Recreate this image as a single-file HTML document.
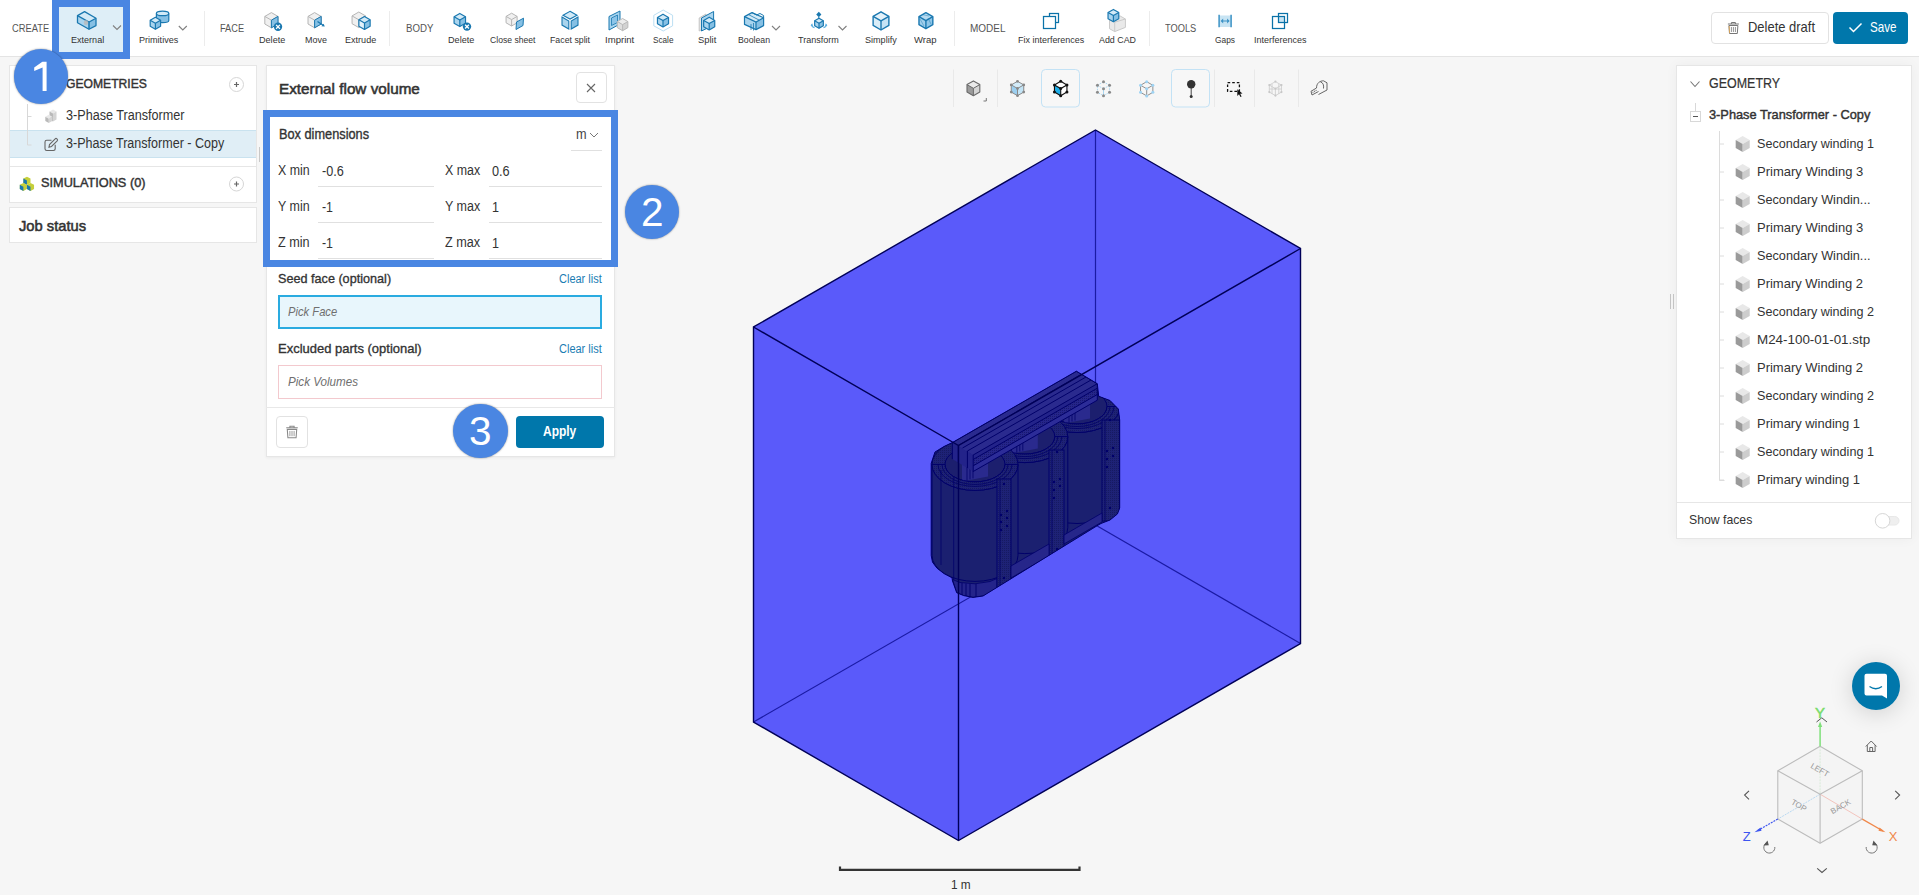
<!DOCTYPE html>
<html><head><meta charset="utf-8"><style>
*{box-sizing:border-box;margin:0;padding:0}
html,body{width:1919px;height:895px;overflow:hidden;background:#f6f6f6;font-family:"Liberation Sans",sans-serif;color:#333}
body{position:relative}
.a{position:absolute}
.t{position:absolute;white-space:nowrap;line-height:1;transform-origin:0 0}
.card{position:absolute;background:#fff;border:1px solid #e6e6e6}
.badge{position:absolute;width:54px;height:54px;border-radius:50%;background:#4a86e2;box-shadow:0 0 2px rgba(0,0,0,.45)}
.hl{position:absolute;border:7px solid #4a86e2}
</style></head><body>

<svg class="a" style="left:0;top:0" width="1919" height="895">
  <polygon points="1095.5,130 1300.5,248.5 1300.5,643.5 958.5,840.5 753.5,722 753.5,327" fill="#5a5afa"/>
  <g stroke="#1a1aa4" stroke-width="1.2" fill="none">
    <line x1="1095.5" y1="130" x2="1095.5" y2="525"/>
    <line x1="1095.5" y1="525" x2="753.5" y2="722"/>
    <line x1="1095.5" y1="525" x2="1300.5" y2="643.5"/>
  </g>
  <defs><clipPath id="tc"><polygon points="931.2,463.3 935,452 944,446.5 952.3,442.6 1076.4,371.2 1097.3,383.7 1098.7,396.3 1110,400.5 1118.3,409 1119.7,420 1119.7,508 1117.4,514 1110,520 1101,523.5 1098,525.2 983,596 973,597.4 963.7,595.6 956.7,592.7 952.5,581 952,577.8 944,573.6 937,568.2 932.5,562.2 931.2,555.5"/></clipPath><pattern id="dots" width="2" height="2" patternUnits="userSpaceOnUse"><rect width="2" height="2" fill="#1e2276"/><rect width="1" height="1" fill="#161a62"/></pattern><pattern id="dots2" width="2" height="2" patternUnits="userSpaceOnUse"><rect width="2" height="2" fill="#25258a"/><rect width="1" height="1" fill="#181870"/></pattern></defs><polygon points="931.2,463.3 935,452 944,446.5 952.3,442.6 1076.4,371.2 1097.3,383.7 1098.7,396.3 1110,400.5 1118.3,409 1119.7,420 1119.7,508 1117.4,514 1110,520 1101,523.5 1098,525.2 983,596 973,597.4 963.7,595.6 956.7,592.7 952.5,581 952,577.8 944,573.6 937,568.2 932.5,562.2 931.2,555.5" fill="#1b2070"/><g clip-path="url(#tc)"><path d="M1034,406.5 V497.5 A43,26 0 0 0 1120,497.5 V406.5 Z" fill="#1b2070" stroke="#00006a" stroke-width="1"/><ellipse cx="1077" cy="406.5" rx="43" ry="26" fill="url(#dots)" stroke="#00006a" stroke-width="1"/><ellipse cx="1077" cy="406.5" rx="30" ry="17.5" fill="#1c1f6e" stroke="#00006a" stroke-width="1"/><polygon points="1064,376.5 1090,361.5 1090,418.5 1064,423.5" fill="#2a2a8e"/><path d="M1069,379.5 V422.5 M1072,377.5 V421.5 M1075,376.5 V420.5" stroke="#00006a" stroke-width=".8"/><path d="M1034,406.5 A43,26 0 0 0 1120,406.5 H1107 A30,17.5 0 0 1 1047,406.5 Z" fill="url(#dots)" stroke="#00006a" stroke-width="1"/><path d="M1040,406.5 A37,22 0 0 0 1114,406.5" fill="none" stroke="#00006a" stroke-width=".8"/><path d="M1044,406.5 A33,20.0 0 0 0 1110,406.5" fill="none" stroke="#00006a" stroke-width=".8"/><path d="M981.8,436.6 V527.6 A43,26 0 0 0 1067.8,527.6 V436.6 Z" fill="#1b2070" stroke="#00006a" stroke-width="1"/><ellipse cx="1024.8" cy="436.6" rx="43" ry="26" fill="url(#dots)" stroke="#00006a" stroke-width="1"/><ellipse cx="1024.8" cy="436.6" rx="30" ry="17.5" fill="#1c1f6e" stroke="#00006a" stroke-width="1"/><polygon points="1011.8,406.6 1037.8,391.6 1037.8,448.6 1011.8,453.6" fill="#2a2a8e"/><path d="M1016.8,409.6 V452.6 M1019.8,407.6 V451.6 M1022.8,406.6 V450.6" stroke="#00006a" stroke-width=".8"/><path d="M981.8,436.6 A43,26 0 0 0 1067.8,436.6 H1054.8 A30,17.5 0 0 1 994.8,436.6 Z" fill="url(#dots)" stroke="#00006a" stroke-width="1"/><path d="M987.8,436.6 A37,22 0 0 0 1061.8,436.6" fill="none" stroke="#00006a" stroke-width=".8"/><path d="M991.8,436.6 A33,20.0 0 0 0 1057.8,436.6" fill="none" stroke="#00006a" stroke-width=".8"/><path d="M932,464.4 V555.4 A43,26 0 0 0 1018,555.4 V464.4 Z" fill="#1b2070" stroke="#00006a" stroke-width="1"/><ellipse cx="975" cy="464.4" rx="43" ry="26" fill="url(#dots)" stroke="#00006a" stroke-width="1"/><ellipse cx="975" cy="464.4" rx="30" ry="17.5" fill="#1c1f6e" stroke="#00006a" stroke-width="1"/><polygon points="962,434.4 988,419.4 988,476.4 962,481.4" fill="#2a2a8e"/><path d="M967,437.4 V480.4 M970,435.4 V479.4 M973,434.4 V478.4" stroke="#00006a" stroke-width=".8"/><path d="M932,464.4 A43,26 0 0 0 1018,464.4 H1005 A30,17.5 0 0 1 945,464.4 Z" fill="url(#dots)" stroke="#00006a" stroke-width="1"/><path d="M938,464.4 A37,22 0 0 0 1012,464.4" fill="none" stroke="#00006a" stroke-width=".8"/><path d="M942,464.4 A33,20.0 0 0 0 1008,464.4" fill="none" stroke="#00006a" stroke-width=".8"/><polygon points="952.3,442.6 973.2,455 1097.3,383.7 1097.3,400.2 973.2,471.5 952.3,459.1" fill="#23238a"/><polygon points="973.2,459.5 1097.3,388.2 1097.3,394.2 973.2,465.5" fill="url(#dots2)"/><polygon points="973.2,466 1097.3,394.7 1097.3,400.2 973.2,471.5" fill="#2c2c98"/><polygon points="952.3,442.6 1076.4,371.2 1097.3,383.7 973.2,455" fill="#2a2a8e"/><g stroke="#00006a" stroke-width="1" fill="none"><polyline points="952.3,442.6 1076.4,371.2 1097.3,383.7"/><line x1="958.2" y1="445.5" x2="1081.5" y2="374.3"/><line x1="962.5" y1="448" x2="1086" y2="377"/><line x1="967.4" y1="451" x2="1091" y2="380"/><line x1="973.2" y1="455" x2="1097.3" y2="383.7"/><line x1="973.2" y1="459.5" x2="1097.3" y2="388.2"/><line x1="973.2" y1="465.8" x2="1097.3" y2="394.5"/><line x1="973.2" y1="471.5" x2="1097.3" y2="400.2"/><line x1="952.3" y1="442.6" x2="952.3" y2="459.1"/><line x1="958.2" y1="445.5" x2="958.2" y2="462.5"/><line x1="967.4" y1="451" x2="967.4" y2="468"/><line x1="973.2" y1="455" x2="973.2" y2="471.5"/><line x1="1097.3" y1="383.7" x2="1097.3" y2="400.2"/></g><polygon points="952.5,579.5 960,582.5 975,583.8 990,581.5 997,578.5 997,592 983,596 973,597.4 963.7,595.6 956.7,592.7" fill="#24248a" stroke="#00006a" stroke-width=".8"/><path d="M962,583 V595.5 M966,583.5 V596.5 M970,583.8 V597 M976,584 V597" stroke="#00006a" stroke-width=".9"/><rect x="997" y="479" width="14" height="111" fill="url(#dots)" stroke="#00006a" stroke-width="1"/><line x1="1000" y1="479" x2="1000" y2="590" stroke="#00006a" stroke-width=".8"/><rect x="1049" y="450" width="15" height="110" fill="url(#dots)" stroke="#00006a" stroke-width="1"/><line x1="1052" y1="450" x2="1052" y2="560" stroke="#00006a" stroke-width=".8"/><rect x="1102" y="420" width="17.700000000000045" height="101" fill="url(#dots)" stroke="#00006a" stroke-width="1"/><line x1="1105" y1="420" x2="1105" y2="521" stroke="#00006a" stroke-width=".8"/><circle cx="1004" cy="484" r="1.2" fill="#00006a"/><circle cx="1004" cy="578" r="1.2" fill="#00006a"/><circle cx="1057" cy="452" r="1.2" fill="#00006a"/><circle cx="1057" cy="549" r="1.2" fill="#00006a"/><circle cx="1110" cy="420" r="1.2" fill="#00006a"/><circle cx="1110" cy="508" r="1.2" fill="#00006a"/><circle cx="1001" cy="515" r="1.2" fill="#00006a"/><circle cx="1007" cy="511" r="1.2" fill="#00006a"/><circle cx="1001" cy="522" r="1.2" fill="#00006a"/><circle cx="1007" cy="518" r="1.2" fill="#00006a"/><circle cx="1001" cy="530" r="1.2" fill="#00006a"/><circle cx="1007" cy="526" r="1.2" fill="#00006a"/><circle cx="1054" cy="482" r="1.2" fill="#00006a"/><circle cx="1060" cy="479" r="1.2" fill="#00006a"/><circle cx="1054" cy="490" r="1.2" fill="#00006a"/><circle cx="1060" cy="486" r="1.2" fill="#00006a"/><circle cx="1054" cy="498" r="1.2" fill="#00006a"/><circle cx="1107" cy="451" r="1.2" fill="#00006a"/><circle cx="1113" cy="448" r="1.2" fill="#00006a"/><circle cx="1107" cy="459" r="1.2" fill="#00006a"/><circle cx="1113" cy="456" r="1.2" fill="#00006a"/><circle cx="1107" cy="467" r="1.2" fill="#00006a"/><path d="M941,470 V565 M953.7,476 V580" stroke="#00006a" stroke-width=".8"/><polygon points="1011,566 1049,544 1049,556 1011,578" fill="#26268a" stroke="#00006a" stroke-width=".8"/><polygon points="1064,535 1102,513 1102,522 1064,544" fill="#26268a" stroke="#00006a" stroke-width=".8"/></g><polygon points="931.2,463.3 935,452 944,446.5 952.3,442.6 1076.4,371.2 1097.3,383.7 1098.7,396.3 1110,400.5 1118.3,409 1119.7,420 1119.7,508 1117.4,514 1110,520 1101,523.5 1098,525.2 983,596 973,597.4 963.7,595.6 956.7,592.7 952.5,581 952,577.8 944,573.6 937,568.2 932.5,562.2 931.2,555.5" fill="none" stroke="#00006a" stroke-width="1"/>
  <g stroke="#000058" stroke-width="1.4" fill="none" stroke-linejoin="miter">
    <polygon points="1095.5,130 1300.5,248.5 1300.5,643.5 958.5,840.5 753.5,722 753.5,327"/>
    <polyline points="753.5,327 958.5,445.5 1300.5,248.5"/>
    <line x1="958.5" y1="445.5" x2="958.5" y2="840.5"/>
  </g>
  <path d="M840,866.5 V869.8 H1079.5 V866.5" stroke="#333" stroke-width="2.2" fill="none"/>
  <g fill="#e9e9e9"><rect x="953" y="69.5" width="1" height="37.5"/><rect x="997" y="69.5" width="1" height="37.5"/><rect x="1214" y="69.5" width="1" height="37.5"/><rect x="1254" y="69.5" width="1" height="37.5"/><rect x="1298" y="69.5" width="1" height="37.5"/></g><rect x="1041.5" y="69.5" width="38" height="37.5" rx="4" fill="#f7f7f7" stroke="#c3e2f5" stroke-width="1"/><rect x="1171.5" y="69.5" width="38" height="37.5" rx="4" fill="#f7f7f7" stroke="#c3e2f5" stroke-width="1"/><polygon points="973.40,80.90 979.81,84.60 973.40,88.30 966.99,84.60" fill="#eaeaea"/><polygon points="966.99,84.60 973.40,88.30 973.40,95.70 966.99,92.00" fill="#9b9b9b"/><polygon points="973.40,88.30 979.81,84.60 979.81,92.00 973.40,95.70" fill="#d4d4d4"/><polygon points="973.40,80.90 979.81,84.60 979.81,92.00 973.40,95.70 966.99,92.00 966.99,84.60" fill="none" stroke="#6a6a6a" stroke-width="1.1" stroke-linejoin="round"/><polyline points="966.99,84.60 973.40,88.30 979.81,84.60" fill="none" stroke="#6a6a6a" stroke-width="1"/><line x1="973.4" y1="88.3" x2="973.4" y2="95.7" stroke="#6a6a6a" stroke-width="1"/><path d="M983.5,101 H986.3 V98" fill="none" stroke="#777" stroke-width="1"/><polygon points="1017.50,81.30 1023.74,84.90 1017.50,88.50 1011.26,84.90" fill="#d3ebf8"/><polygon points="1011.26,84.90 1017.50,88.50 1017.50,95.70 1011.26,92.10" fill="#9ccff0"/><polygon points="1017.50,88.50 1023.74,84.90 1023.74,92.10 1017.50,95.70" fill="#c3e4f6"/><polygon points="1017.50,81.30 1023.74,84.90 1023.74,92.10 1017.50,95.70 1011.26,92.10 1011.26,84.90" fill="none" stroke="#8a8a8a" stroke-width="1" stroke-linejoin="round"/><polyline points="1011.26,84.90 1017.50,88.50 1023.74,84.90" fill="none" stroke="#8a8a8a" stroke-width="1"/><line x1="1017.5" y1="88.5" x2="1017.5" y2="95.7" stroke="#8a8a8a" stroke-width="1"/><circle cx="1017.50" cy="81.30" r="1.4" fill="#888"/><circle cx="1011.26" cy="84.90" r="1.4" fill="#888"/><circle cx="1023.74" cy="84.90" r="1.4" fill="#888"/><circle cx="1017.50" cy="88.50" r="1.4" fill="#888"/><circle cx="1011.26" cy="92.10" r="1.4" fill="#888"/><circle cx="1023.74" cy="92.10" r="1.4" fill="#888"/><circle cx="1017.50" cy="95.70" r="1.4" fill="#888"/><polygon points="1060.70,81.30 1066.94,84.90 1060.70,88.50 1054.46,84.90" fill="#fff"/><polygon points="1054.46,84.90 1060.70,88.50 1060.70,95.70 1054.46,92.10" fill="#1eaee8"/><polygon points="1060.70,88.50 1066.94,84.90 1066.94,92.10 1060.70,95.70" fill="#fff"/><polygon points="1060.70,81.30 1066.94,84.90 1066.94,92.10 1060.70,95.70 1054.46,92.10 1054.46,84.90" fill="none" stroke="#111" stroke-width="1.1" stroke-linejoin="round"/><polyline points="1054.46,84.90 1060.70,88.50 1066.94,84.90" fill="none" stroke="#111" stroke-width="1.1"/><line x1="1060.7" y1="88.5" x2="1060.7" y2="95.7" stroke="#111" stroke-width="1.1"/><circle cx="1060.70" cy="81.30" r="1.5" fill="#111"/><circle cx="1054.46" cy="84.90" r="1.5" fill="#111"/><circle cx="1066.94" cy="84.90" r="1.5" fill="#111"/><circle cx="1060.70" cy="88.50" r="1.5" fill="#111"/><circle cx="1054.46" cy="92.10" r="1.5" fill="#111"/><circle cx="1066.94" cy="92.10" r="1.5" fill="#111"/><circle cx="1060.70" cy="95.70" r="1.5" fill="#111"/><polygon points="1103.50,81.80 1109.56,85.30 1109.56,92.30 1103.50,95.80 1097.44,92.30 1097.44,85.30" fill="none" stroke="#a9d7f2" stroke-width="1" stroke-dasharray="1.5 1"/><polyline points="1097.44,85.30 1103.50,88.80 1109.56,85.30" fill="none" stroke="#a9d7f2" stroke-width="1" stroke-dasharray="1.5 1"/><line x1="1103.5" y1="88.8" x2="1103.5" y2="95.8" stroke="#a9d7f2" stroke-width="1"/><circle cx="1103.50" cy="81.80" r="1.5" fill="#8a8a8a"/><circle cx="1097.44" cy="85.30" r="1.5" fill="#8a8a8a"/><circle cx="1109.56" cy="85.30" r="1.5" fill="#8a8a8a"/><circle cx="1103.50" cy="88.80" r="1.5" fill="#8a8a8a"/><circle cx="1097.44" cy="92.30" r="1.5" fill="#8a8a8a"/><circle cx="1109.56" cy="92.30" r="1.5" fill="#8a8a8a"/><circle cx="1103.50" cy="95.80" r="1.5" fill="#8a8a8a"/><polygon points="1146.70,81.70 1152.85,85.25 1152.85,92.35 1146.70,95.90 1140.55,92.35 1140.55,85.25" fill="none" stroke="#8f8f8f" stroke-width="1"/><polyline points="1140.55,85.25 1146.70,88.80 1152.85,85.25" fill="none" stroke="#8f8f8f" stroke-width="1"/><line x1="1146.7" y1="88.8" x2="1146.7" y2="95.9" stroke="#8f8f8f" stroke-width="1"/><circle cx="1146.70" cy="81.70" r="1.5" fill="#9fd3f3"/><circle cx="1140.55" cy="85.25" r="1.5" fill="#9fd3f3"/><circle cx="1152.85" cy="85.25" r="1.5" fill="#9fd3f3"/><circle cx="1146.70" cy="88.80" r="1.5" fill="#9fd3f3"/><circle cx="1140.55" cy="92.35" r="1.5" fill="#9fd3f3"/><circle cx="1152.85" cy="92.35" r="1.5" fill="#9fd3f3"/><circle cx="1146.70" cy="95.90" r="1.5" fill="#9fd3f3"/><line x1="1191.2" y1="86" x2="1191.2" y2="96" stroke="#444" stroke-width="1"/><circle cx="1191.2" cy="84.2" r="4.2" fill="#333"/><circle cx="1191.2" cy="96.4" r="1.5" fill="#333"/><rect x="1227.6" y="82.6" width="11.8" height="8.8" fill="none" stroke="#111" stroke-width="1.3" stroke-dasharray="2.6 2"/><polygon points="1237.3,89.3 1237.3,96 1239,94.3 1240.5,97 1241.6,96.4 1240.2,93.8 1242.5,93.6" fill="#111"/><g stroke="#cfcfcf" stroke-width=".9" fill="none"><polygon points="1275.40,81.60 1281.46,85.10 1281.46,92.10 1275.40,95.60 1269.34,92.10 1269.34,85.10"/><polyline points="1269.34,85.10 1275.40,88.60 1281.46,85.10"/><line x1="1275.4" y1="88.6" x2="1275.4" y2="95.6"/><path d="M1272,84 L1272,94 M1278.8,84 L1278.8,94 M1269.5,89 L1281.5,89"/></g><circle cx="1275.40" cy="81.60" r="1.1" fill="#c8c8c8"/><circle cx="1269.34" cy="85.10" r="1.1" fill="#c8c8c8"/><circle cx="1281.46" cy="85.10" r="1.1" fill="#c8c8c8"/><circle cx="1275.40" cy="88.60" r="1.1" fill="#c8c8c8"/><circle cx="1269.34" cy="92.10" r="1.1" fill="#c8c8c8"/><circle cx="1281.46" cy="92.10" r="1.1" fill="#c8c8c8"/><circle cx="1275.40" cy="95.60" r="1.1" fill="#c8c8c8"/><g fill="none" stroke="#666" stroke-width="1"><path d="M1316.5,88 C1316.5,83 1320,80.8 1323.5,80.8 L1327,82.8 L1327,90 L1318.5,94.5"/><path d="M1316.5,88 L1311,91.3 L1312,95 L1318.5,91.5"/><path d="M1320.5,82 C1323,82.5 1324,85 1323.5,88.5"/></g><path d="M1312.5,92.5 L1317,90" stroke="#777" stroke-width="1.2" stroke-dasharray="1 .8"/>
  <polygon points="1820.10,746.30 1862.30,770.80 1862.30,819.10 1820.10,843.30 1777.80,819.10 1777.80,770.80" fill="#f3f3f3" fill-opacity=".6"/><line x1="1820.1" y1="746.3" x2="1820.1" y2="794.2" stroke="#d8ead8" stroke-width="1" stroke-dasharray="2 1"/><line x1="1820.1" y1="794.2" x2="1777.8" y2="819.1" stroke="#b9d9f2" stroke-width="1" stroke-dasharray="2 1"/><line x1="1820.1" y1="794.2" x2="1862.3" y2="819.1" stroke="#f3c4bd" stroke-width="1"/><g fill="none" stroke="#bcbcbc" stroke-width="1.1" stroke-linejoin="round"><polygon points="1820.10,746.30 1862.30,770.80 1862.30,819.10 1820.10,843.30 1777.80,819.10 1777.80,770.80"/><polyline points="1777.80,770.80 1820.10,794.20 1862.30,770.80"/><line x1="1820.1" y1="794.2" x2="1820.1" y2="843.3"/></g><line x1="1820.1" y1="724" x2="1820.1" y2="746.3" stroke="#7fe07a" stroke-width="1.5"/><polygon points="1820.1,721.5 1818,727 1822.2,727" fill="#7fe07a"/><path d="M1816.5,722 L1821.8,717.8 L1827,722" fill="none" stroke="#555" stroke-width="1"/><line x1="1777.8" y1="819.1" x2="1757" y2="831" stroke="#3c55f0" stroke-width="1.2" stroke-dasharray="2 1"/><polygon points="1754.5,832.3 1760.5,827.5 1761.5,830.8" fill="#3c55f0"/><line x1="1862.3" y1="819.1" x2="1883" y2="831" stroke="#f0884a" stroke-width="1.3"/><polygon points="1885.5,832.3 1879.5,827.5 1878.5,830.8" fill="#f0884a"/><path d="M1749,790.8 L1744.6,795.1 L1749,799.4" fill="none" stroke="#555" stroke-width="1.1"/><path d="M1895.2,790.8 L1899.6,795.1 L1895.2,799.4" fill="none" stroke="#555" stroke-width="1.1"/><path d="M1817.2,868.3 L1822,872.5 L1826.8,868.3" fill="none" stroke="#555" stroke-width="1.1"/><text x="1820" y="717.5" font-family="Liberation Sans, sans-serif" font-size="15" fill="#78dc6a" stroke="#78dc6a" stroke-width=".5" text-anchor="middle">Y</text><text x="1746.8" y="841" font-family="Liberation Sans, sans-serif" font-size="13" fill="#3c55f0" text-anchor="middle">Z</text><text x="1893.2" y="841" font-family="Liberation Sans, sans-serif" font-size="13" fill="#f0884a" text-anchor="middle">X</text><text transform="translate(1819.5,770.5) rotate(30)" font-family="Liberation Sans, sans-serif" font-size="8" fill="#9a9a9a" text-anchor="middle" dominant-baseline="middle">LEFT</text><text transform="translate(1798.5,806) rotate(30)" font-family="Liberation Sans, sans-serif" font-size="8" fill="#9a9a9a" text-anchor="middle" dominant-baseline="middle">TOP</text><text transform="translate(1841,807) rotate(-30)" font-family="Liberation Sans, sans-serif" font-size="8" fill="#9a9a9a" text-anchor="middle" dominant-baseline="middle">BACK</text><path d="M1865.8,746.5 L1871.2,741 L1876.6,746.5 M1867.3,745.2 V751.5 H1875.1 V745.2 M1869.8,751.5 V747.5 H1872.6 V751.5" fill="none" stroke="#666" stroke-width="1"/><path d="M1766,843.2 A5.5,5.5 0 1 0 1774.8,847" fill="none" stroke="#777" stroke-width="1"/><polygon points="1763.5,845.5 1767.5,840.5 1768.8,845.3" fill="#555"/><path d="M1875,843.2 A5.5,5.5 0 1 1 1866.2,847" fill="none" stroke="#777" stroke-width="1"/><polygon points="1877.5,845.5 1873.5,840.5 1872.2,845.3" fill="#555"/>
</svg>
<div class="a" style="left:1852px;top:661.7px;width:48px;height:48px;border-radius:50%;background:#0077ab;box-shadow:0 3px 24px rgba(0,0,0,.16)"></div>
<svg class="a" style="left:1852px;top:661.7px" width="48" height="48">
 <path d="M14.5,11.8 H33 Q35,11.8 35,13.8 V36.5 L30,33.5 H14.5 Q12.5,33.5 12.5,31.5 V13.8 Q12.5,11.8 14.5,11.8 Z" fill="#fff"/>
 <path d="M17.5,24.5 Q23.8,29 30,24.5" fill="none" stroke="#0077ab" stroke-width="1.3"/>
</svg>


<div class="a" style="left:0;top:0;width:1919px;height:56px;background:#fff"></div>
<div class="a" style="left:0;top:56px;width:1919px;height:1px;background:#e4e4e4"></div>
<div class="a" style="left:59px;top:7px;width:64px;height:45px;background:#deeef7"></div>
<div class="a" style="left:1710.5px;top:12px;width:118px;height:32px;background:#fff;border:1px solid #e2e2e2;border-radius:4px"></div>
<div class="a" style="left:1833px;top:12px;width:74.5px;height:32px;background:#0077ab;border-radius:4px"></div>
<svg class="a" style="left:0;top:0" width="1919" height="57">
 <g fill="#ececec">
  <rect x="204" y="11" width="1" height="35"/><rect x="389" y="11" width="1" height="35"/>
  <rect x="954" y="11" width="1" height="35"/><rect x="1149" y="11" width="1" height="35"/>
 </g>
 <polygon points="84.60,11.60 96.00,18.20 89.00,22.00 77.50,15.60" fill="#d3eaf7"/><polygon points="77.50,15.60 89.00,22.00 89.00,29.30 77.50,22.80" fill="#a9d4ee"/><polygon points="89.00,22.00 96.00,18.20 96.00,25.60 89.00,29.30" fill="#86c0e4"/><polygon points="84.60,11.60 96.00,18.20 96.00,25.60 89.00,29.30 77.50,22.80 77.50,15.60" fill="none" stroke="#1a78b0" stroke-width="1.3" stroke-linejoin="round"/><polyline points="77.50,15.60 89.00,22.00 96.00,18.20" fill="none" stroke="#1a78b0" stroke-width="1.3"/><line x1="89" y1="22" x2="89" y2="29.3" stroke="#1a78b0" stroke-width="1.5"/><ellipse cx="86" cy="22.5" rx="2.2" ry="2.6" fill="#b9b9b9" opacity=".8"/><polyline points="113.00,25.50 117.00,29.50 121.00,25.50" fill="none" stroke="#808080" stroke-width="1.1"/><path d="M156.4,13.4 V20.5 A6.2,2.2 0 0 0 168.8,20.5 V13.4" fill="#86c0e4" stroke="#1a78b0" stroke-width="1.2"/><ellipse cx="162.6" cy="13.4" rx="6.2" ry="2.2" fill="#d3eaf7" stroke="#1a78b0" stroke-width="1.2"/><polygon points="155.40,17.30 160.60,20.30 155.40,23.30 150.20,20.30" fill="#d3eaf7"/><polygon points="150.20,20.30 155.40,23.30 155.40,29.30 150.20,26.30" fill="#a9d4ee"/><polygon points="155.40,23.30 160.60,20.30 160.60,26.30 155.40,29.30" fill="#86c0e4"/><polygon points="155.40,17.30 160.60,20.30 160.60,26.30 155.40,29.30 150.20,26.30 150.20,20.30" fill="none" stroke="#1a78b0" stroke-width="1.2" stroke-linejoin="round"/><polyline points="150.20,20.30 155.40,23.30 160.60,20.30" fill="none" stroke="#1a78b0" stroke-width="1.2" stroke-linejoin="round"/><line x1="155.4" y1="23.3" x2="155.4" y2="29.3" stroke="#1a78b0" stroke-width="1.2"/><polyline points="178.80,26.00 182.80,30.00 186.80,26.00" fill="none" stroke="#808080" stroke-width="1.1"/><polygon points="271.40,12.60 277.98,16.40 271.40,20.20 264.82,16.40" fill="#f0f0f0"/><polygon points="264.82,16.40 271.40,20.20 271.40,27.80 264.82,24.00" fill="#f0f0f0"/><polygon points="271.40,20.20 277.98,16.40 277.98,24.00 271.40,27.80" fill="#86c0e4"/><polygon points="271.40,12.60 277.98,16.40 277.98,24.00 271.40,27.80 264.82,24.00 264.82,16.40" fill="none" stroke="#b5b5b5" stroke-width="1.0" stroke-linejoin="round"/><polyline points="264.82,16.40 271.40,20.20 277.98,16.40" fill="none" stroke="#b5b5b5" stroke-width="1.0" stroke-linejoin="round"/><line x1="271.4" y1="20.2" x2="271.4" y2="27.799999999999997" stroke="#b5b5b5" stroke-width="1.0"/><polygon points="271.40,20.20 278.00,16.40 278.00,24.00 271.40,27.80" fill="#86c0e4" stroke="#1a78b0" stroke-width="1"/><circle cx="278" cy="26.8" r="4.2" fill="#1a78b0"/><path d="M276.11,24.91L279.89,28.69M279.89,24.91L276.11,28.69" stroke="#fff" stroke-width="1.3"/><polygon points="314.60,12.60 321.18,16.40 314.60,20.20 308.02,16.40" fill="#f0f0f0"/><polygon points="308.02,16.40 314.60,20.20 314.60,27.80 308.02,24.00" fill="#f0f0f0"/><polygon points="314.60,20.20 321.18,16.40 321.18,24.00 314.60,27.80" fill="#f0f0f0"/><polygon points="314.60,12.60 321.18,16.40 321.18,24.00 314.60,27.80 308.02,24.00 308.02,16.40" fill="none" stroke="#b5b5b5" stroke-width="1.0" stroke-linejoin="round"/><polyline points="308.02,16.40 314.60,20.20 321.18,16.40" fill="none" stroke="#b5b5b5" stroke-width="1.0" stroke-linejoin="round"/><line x1="314.6" y1="20.2" x2="314.6" y2="27.799999999999997" stroke="#b5b5b5" stroke-width="1.0"/><polygon points="314.60,20.20 321.20,16.40 321.20,24.00 314.60,27.80" fill="#86c0e4" stroke="#1a78b0" stroke-width="1"/><path d="M317.5,21.5 L323.5,25.5" stroke="#1a78b0" stroke-width="1.3"/><polygon points="324.80,26.50 321.40,26.20 323.60,23.80" fill="#1a78b0"/><polyline points="0.00,0.00 0.00,0.00 0.00,0.00" fill="none" stroke="none" stroke-width="1.1"/><polygon points="358.80,12.00 365.55,15.90 358.80,19.80 352.05,15.90" fill="#f0f0f0"/><polygon points="352.05,15.90 358.80,19.80 358.80,27.60 352.05,23.70" fill="#f0f0f0"/><polygon points="358.80,19.80 365.55,15.90 365.55,23.70 358.80,27.60" fill="#f0f0f0"/><polygon points="358.80,12.00 365.55,15.90 365.55,23.70 358.80,27.60 352.05,23.70 352.05,15.90" fill="none" stroke="#b5b5b5" stroke-width="1.0" stroke-linejoin="round"/><polyline points="352.05,15.90 358.80,19.80 365.55,15.90" fill="none" stroke="#b5b5b5" stroke-width="1.0" stroke-linejoin="round"/><line x1="358.8" y1="19.8" x2="358.8" y2="27.6" stroke="#b5b5b5" stroke-width="1.0"/><polygon points="364.50,16.50 370.13,19.75 364.50,23.00 358.87,19.75" fill="#d3eaf7"/><polygon points="358.87,19.75 364.50,23.00 364.50,29.50 358.87,26.25" fill="#e3f2fb"/><polygon points="364.50,23.00 370.13,19.75 370.13,26.25 364.50,29.50" fill="#86c0e4"/><polygon points="364.50,16.50 370.13,19.75 370.13,26.25 364.50,29.50 358.87,26.25 358.87,19.75" fill="none" stroke="#1a78b0" stroke-width="1.2" stroke-linejoin="round"/><polyline points="358.87,19.75 364.50,23.00 370.13,19.75" fill="none" stroke="#1a78b0" stroke-width="1.2" stroke-linejoin="round"/><line x1="364.5" y1="23" x2="364.5" y2="29.5" stroke="#1a78b0" stroke-width="1.2"/><polygon points="459.80,13.40 465.52,16.70 459.80,20.00 454.08,16.70" fill="#d3eaf7"/><polygon points="454.08,16.70 459.80,20.00 459.80,26.60 454.08,23.30" fill="#a9d4ee"/><polygon points="459.80,20.00 465.52,16.70 465.52,23.30 459.80,26.60" fill="#86c0e4"/><polygon points="459.80,13.40 465.52,16.70 465.52,23.30 459.80,26.60 454.08,23.30 454.08,16.70" fill="none" stroke="#1a78b0" stroke-width="1.2" stroke-linejoin="round"/><polyline points="454.08,16.70 459.80,20.00 465.52,16.70" fill="none" stroke="#1a78b0" stroke-width="1.2" stroke-linejoin="round"/><line x1="459.8" y1="20" x2="459.8" y2="26.6" stroke="#1a78b0" stroke-width="1.2"/><circle cx="467" cy="26.6" r="4.2" fill="#1a78b0"/><path d="M465.11,24.71L468.89,28.490000000000002M468.89,24.71L465.11,28.490000000000002" stroke="#fff" stroke-width="1.3"/><polygon points="511.60,13.20 517.14,16.40 511.60,19.60 506.06,16.40" fill="#f0f0f0"/><polygon points="506.06,16.40 511.60,19.60 511.60,26.00 506.06,22.80" fill="#f0f0f0"/><polygon points="511.60,19.60 517.14,16.40 517.14,22.80 511.60,26.00" fill="#f0f0f0"/><polygon points="511.60,13.20 517.14,16.40 517.14,22.80 511.60,26.00 506.06,22.80 506.06,16.40" fill="none" stroke="#b5b5b5" stroke-width="1.0" stroke-linejoin="round"/><polyline points="506.06,16.40 511.60,19.60 517.14,16.40" fill="none" stroke="#b5b5b5" stroke-width="1.0" stroke-linejoin="round"/><line x1="511.6" y1="19.6" x2="511.6" y2="26.0" stroke="#b5b5b5" stroke-width="1.0"/><polygon points="516.50,22.00 523.50,18.20 523.00,25.50 516.00,29.50" fill="#86c0e4" stroke="#1a78b0" stroke-width="1"/><polygon points="570.00,11.30 577.00,15.20 570.00,19.00 563.00,15.20" fill="#d3eaf7" stroke="#1a78b0" stroke-width="1.1"/><polygon points="562.00,17.10 568.80,21.00 568.80,29.00 562.00,25.10" fill="#a9d4ee" stroke="#1a78b0" stroke-width="1.1"/><polygon points="578.00,17.10 571.20,21.00 571.20,29.00 578.00,25.10" fill="#86c0e4" stroke="#1a78b0" stroke-width="1.1"/><polygon points="609.00,16.50 620.00,11.00 620.00,24.00 609.00,30.00" fill="#a9d4ee" stroke="#1a78b0" stroke-width="1"/><polygon points="611.50,18.00 617.50,15.00 617.50,22.50 611.50,25.50" fill="#8cc4e8" stroke="#1a78b0" stroke-width=".8"/><polygon points="622.60,18.50 627.88,21.55 622.60,24.60 617.32,21.55" fill="#ececec"/><polygon points="617.32,21.55 622.60,24.60 622.60,30.70 617.32,27.65" fill="#dedede"/><polygon points="622.60,24.60 627.88,21.55 627.88,27.65 622.60,30.70" fill="#d2d2d2"/><polygon points="622.60,18.50 627.88,21.55 627.88,27.65 622.60,30.70 617.32,27.65 617.32,21.55" fill="none" stroke="#b9b9b9" stroke-width="1.0" stroke-linejoin="round"/><polyline points="617.32,21.55 622.60,24.60 627.88,21.55" fill="none" stroke="#b9b9b9" stroke-width="1.0" stroke-linejoin="round"/><line x1="622.6" y1="24.6" x2="622.6" y2="30.700000000000003" stroke="#b9b9b9" stroke-width="1.0"/><polygon points="663.20,10.00 672.60,15.30 672.60,25.80 663.20,31.00 653.80,25.80 653.80,15.30" fill="none" stroke="#aad6ef" stroke-width=".8"/><polygon points="663.00,14.20 668.54,17.40 663.00,20.60 657.46,17.40" fill="#d3eaf7"/><polygon points="657.46,17.40 663.00,20.60 663.00,27.00 657.46,23.80" fill="#a9d4ee"/><polygon points="663.00,20.60 668.54,17.40 668.54,23.80 663.00,27.00" fill="#86c0e4"/><polygon points="663.00,14.20 668.54,17.40 668.54,23.80 663.00,27.00 657.46,23.80 657.46,17.40" fill="none" stroke="#1a78b0" stroke-width="1.2" stroke-linejoin="round"/><polyline points="657.46,17.40 663.00,20.60 668.54,17.40" fill="none" stroke="#1a78b0" stroke-width="1.2" stroke-linejoin="round"/><line x1="663" y1="20.6" x2="663" y2="27.0" stroke="#1a78b0" stroke-width="1.2"/><polygon points="699.20,18.00 706.00,14.00 706.00,27.00 699.20,31.00" fill="#e8e8e8" stroke="#c4c4c4" stroke-width="1"/><polygon points="701.50,18.00 713.60,11.50 713.60,25.00 701.50,31.00" fill="#a9d4ee" stroke="#1a78b0" stroke-width="1"/><polygon points="709.20,17.20 714.74,20.40 709.20,23.60 703.66,20.40" fill="#d3eaf7"/><polygon points="703.66,20.40 709.20,23.60 709.20,30.00 703.66,26.80" fill="#a9d4ee"/><polygon points="709.20,23.60 714.74,20.40 714.74,26.80 709.20,30.00" fill="#86c0e4"/><polygon points="709.20,17.20 714.74,20.40 714.74,26.80 709.20,30.00 703.66,26.80 703.66,20.40" fill="none" stroke="#1a78b0" stroke-width="1.2" stroke-linejoin="round"/><polyline points="703.66,20.40 709.20,23.60 714.74,20.40" fill="none" stroke="#1a78b0" stroke-width="1.2" stroke-linejoin="round"/><line x1="709.2" y1="23.6" x2="709.2" y2="30.0" stroke="#1a78b0" stroke-width="1.2"/><polygon points="744.50,16.60 752.00,12.60 763.60,17.80 756.00,22.00" fill="#d3eaf7"/><polygon points="744.50,16.60 756.00,22.00 756.00,29.60 744.50,24.40" fill="#a9d4ee"/><polygon points="756.00,22.00 763.60,17.80 763.60,25.60 756.00,29.60" fill="#86c0e4"/><polygon points="744.50,16.60 752.00,12.60 763.60,17.80 763.60,25.60 756.00,29.60 744.50,24.40" fill="none" stroke="#1a78b0" stroke-width="1.2" stroke-linejoin="round"/><polyline points="744.50,16.60 756.00,22.00 763.60,17.80" fill="none" stroke="#1a78b0" stroke-width="1.2"/><line x1="756" y1="22" x2="756" y2="29.6" stroke="#1a78b0" stroke-width="1.2"/><path d="M748.5,14.6 L759,20 M751,24 V30 M753.5,23 V30.5" stroke="#1a78b0" stroke-width=".8" fill="none"/><path d="M752,12.6 L756.5,15 L760,13.5 L763.6,15.5 V17.8" fill="none" stroke="#1a78b0" stroke-width="1"/><polyline points="772.00,26.00 776.00,30.00 780.00,26.00" fill="none" stroke="#808080" stroke-width="1.1"/><polygon points="819.00,18.20 823.33,20.70 819.00,23.20 814.67,20.70" fill="#d3eaf7"/><polygon points="814.67,20.70 819.00,23.20 819.00,28.20 814.67,25.70" fill="#a9d4ee"/><polygon points="819.00,23.20 823.33,20.70 823.33,25.70 819.00,28.20" fill="#86c0e4"/><polygon points="819.00,18.20 823.33,20.70 823.33,25.70 819.00,28.20 814.67,25.70 814.67,20.70" fill="none" stroke="#1a78b0" stroke-width="1.2" stroke-linejoin="round"/><polyline points="814.67,20.70 819.00,23.20 823.33,20.70" fill="none" stroke="#1a78b0" stroke-width="1.2" stroke-linejoin="round"/><line x1="819" y1="23.2" x2="819" y2="28.2" stroke="#1a78b0" stroke-width="1.2"/><polygon points="818.80,11.80 821.40,14.60 818.80,17.20 816.20,14.60" fill="#1a78b0"/><line x1="818.8" y1="17" x2="818.8" y2="19" stroke="#1a78b0" stroke-width="1"/><path d="M811.5,24.5 Q811.8,27.3 814.5,27.6 M826.5,24.5 Q826.2,27.3 823.5,27.6" fill="none" stroke="#5aaee0" stroke-width="1.1"/><polygon points="810.60,25.80 812.20,23.20 813.00,25.90" fill="#5aaee0"/><polygon points="827.40,25.80 825.80,23.20 825.00,25.90" fill="#5aaee0"/><polyline points="838.50,26.00 842.50,30.00 846.50,26.00" fill="none" stroke="#808080" stroke-width="1.1"/><polygon points="881.00,11.80 888.88,16.35 881.00,20.90 873.12,16.35" fill="#e4f2fa"/><polygon points="873.12,16.35 881.00,20.90 881.00,30.00 873.12,25.45" fill="#d9edf8"/><polygon points="881.00,20.90 888.88,16.35 888.88,25.45 881.00,30.00" fill="#c5e3f5"/><polygon points="881.00,11.80 888.88,16.35 888.88,25.45 881.00,30.00 873.12,25.45 873.12,16.35" fill="none" stroke="#1a78b0" stroke-width="1.4" stroke-linejoin="round"/><polyline points="873.12,16.35 881.00,20.90 888.88,16.35" fill="none" stroke="#1a78b0" stroke-width="1.4" stroke-linejoin="round"/><line x1="881" y1="20.9" x2="881" y2="30.0" stroke="#1a78b0" stroke-width="1.4"/><polygon points="925.90,12.70 932.83,16.70 925.90,20.70 918.97,16.70" fill="#b7dbf1"/><polygon points="918.97,16.70 925.90,20.70 925.90,28.70 918.97,24.70" fill="#a1cfec"/><polygon points="925.90,20.70 932.83,16.70 932.83,24.70 925.90,28.70" fill="#8fc6e8"/><polygon points="925.90,12.70 932.83,16.70 932.83,24.70 925.90,28.70 918.97,24.70 918.97,16.70" fill="none" stroke="#1a78b0" stroke-width="1.4" stroke-linejoin="round"/><polyline points="918.97,16.70 925.90,20.70 932.83,16.70" fill="none" stroke="#1a78b0" stroke-width="1.4" stroke-linejoin="round"/><line x1="925.9" y1="20.7" x2="925.9" y2="28.7" stroke="#1a78b0" stroke-width="1.4"/><path d="M920,19 L924,26 M928,18 L931,24 M922,14.5 L929,16" stroke="#1a78b0" stroke-width=".6" opacity=".7"/><rect x="1049.5" y="13.5" width="9" height="9" fill="#fff" stroke="#0a72a8" stroke-width="1.25"/><rect x="1043.5" y="16.5" width="12" height="12" fill="#fff" stroke="#0a72a8" stroke-width="1.25"/><polygon points="1109.50,19.00 1114.70,16.00 1120.20,16.00 1125.40,19.00 1125.40,27.40 1114.70,31.60 1109.50,28.70" fill="#e9e9e9" stroke="#cacaca" stroke-width="1" stroke-linejoin="round"/><polyline points="1109.50,19.00 1114.70,22.20 1125.40,19.00" fill="none" stroke="#cacaca" stroke-width="1"/><line x1="1114.7" y1="22.2" x2="1114.7" y2="31.6" stroke="#cacaca" stroke-width="1"/><polygon points="1113.40,9.40 1118.77,12.50 1113.40,15.60 1108.03,12.50" fill="#d3eaf7"/><polygon points="1108.03,12.50 1113.40,15.60 1113.40,21.80 1108.03,18.70" fill="#a9d4ee"/><polygon points="1113.40,15.60 1118.77,12.50 1118.77,18.70 1113.40,21.80" fill="#86c0e4"/><polygon points="1113.40,9.40 1118.77,12.50 1118.77,18.70 1113.40,21.80 1108.03,18.70 1108.03,12.50" fill="none" stroke="#1a78b0" stroke-width="1.2" stroke-linejoin="round"/><polyline points="1108.03,12.50 1113.40,15.60 1118.77,12.50" fill="none" stroke="#1a78b0" stroke-width="1.2" stroke-linejoin="round"/><line x1="1113.4" y1="15.6" x2="1113.4" y2="21.8" stroke="#1a78b0" stroke-width="1.2"/><rect x="1219" y="15.5" width="12.5" height="11.5" fill="#c8e4f3"/><path d="M1219.1,14.8 V27.2 M1231.1,14.8 V27.2" stroke="#3d93c6" stroke-width="1.5"/><path d="M1222,21 H1228.5" stroke="#3d93c6" stroke-width="1"/><polygon points="1220.60,21.00 1223.20,18.60 1223.20,23.40" fill="#3d93c6"/><polygon points="1229.70,21.00 1227.10,18.60 1227.10,23.40" fill="#3d93c6"/><rect x="1278.5" y="16.5" width="6" height="6" fill="#c8e4f3"/><rect x="1278.5" y="13.5" width="9" height="9" fill="none" stroke="#0a72a8" stroke-width="1.25"/><rect x="1272.5" y="16.5" width="12" height="12" fill="none" stroke="#0a72a8" stroke-width="1.25"/><path d="M1727.9,24.0 H1738.9 M1731.4,24.0 V22.5 H1735.4 V24.0" fill="none" stroke="#777" stroke-width="1.0"/><path d="M1728.9,25.5 L1729.5,33.5 H1737.3000000000002 L1737.9,25.5 Z" fill="none" stroke="#777" stroke-width="1.0"/><path d="M1731.4,27.0 V32.0 M1733.4,27.0 V32.0 M1735.4,27.0 V32.0" stroke="#777" stroke-width="0.8"/><path d="M1729.1000000000001,26.0 L1729.6000000000001,33.0" stroke="#e8a84c" stroke-width=".8"/><polyline points="1849.50,27.50 1853.50,31.50 1861.50,23.50" fill="none" stroke="#fff" stroke-width="1.5"/>
</svg>


<div class="card" style="left:9px;top:65px;width:248px;height:102px"></div>
<div class="a" style="left:10px;top:130px;width:246px;height:28px;background:#e0eef6;border-top:1px solid #c9e2ef;border-bottom:1px solid #c9e2ef"></div>
<div class="card" style="left:9px;top:166px;width:248px;height:37px"></div>
<div class="card" style="left:9px;top:207px;width:248px;height:36px"></div>
<svg class="a" style="left:0;top:57px" width="262" height="190">
 <g transform="translate(0,-57)">
 <circle cx="236.5" cy="84.5" r="7" fill="#fff" stroke="#d6d6d6" stroke-width="1"/>
 <path d="M234,84.5 H239 M236.5,82 V87" stroke="#666" stroke-width="1.2"/>
 <circle cx="236.5" cy="184" r="7" fill="#fff" stroke="#d6d6d6" stroke-width="1"/>
 <path d="M234,184 H239 M236.5,181.5 V186.5" stroke="#666" stroke-width="1.2"/>
 <path d="M27.5,104 V145 H31.5 M27.5,116.5 H31.5" fill="none" stroke="#d8d8d8" stroke-width="1"/>
 <!-- stepped block icon -->
 <polygon points="49.5,111.5 53,109.5 56.5,111.5 53,113.5" fill="#e8e8e8"/>
 <polygon points="49.5,111.5 53,113.5 53,121.5 49.5,119.5" fill="#b9b9b9"/>
 <polygon points="53,113.5 56.5,111.5 56.5,119.5 53,121.5" fill="#d4d4d4"/>
 <polygon points="45.3,116.8 48.8,114.8 52.3,116.8 48.8,118.8" fill="#e8e8e8"/>
 <polygon points="45.3,116.8 48.8,118.8 48.8,123 45.3,121" fill="#b9b9b9"/>
 <polygon points="48.8,118.8 52.3,116.8 52.3,121 48.8,123" fill="#d4d4d4"/>
 <!-- edit icon -->
 <path d="M51.5,140.3 H46.7 Q45,140.3 45,142 V148.8 Q45,150.5 46.7,150.5 H53.5 Q55.2,150.5 55.2,148.8 V144.8" fill="none" stroke="#666" stroke-width="1.1"/>
 <path d="M49,147.2 L49.5,144.5 L55.2,138.8 Q56,138 56.8,138.8 L57.2,139.2 Q58,140 57.2,140.8 L51.5,146.5 Z" fill="none" stroke="#666" stroke-width="1.1"/>
 <!-- simulations icon -->
 <g transform="matrix(0.89,0,0,0.95,3.78,8.075)">
 <polygon points="26,177.5 30,179.5 30,184 26,186 22,184 22,179.5" fill="#c5cf3a"/>
 <polygon points="22,179.5 26,181.5 26,186 22,184" fill="#1a78b0"/>
 <polygon points="22,184 26,186 26,190.5 22,192.5 18,190.5 18,186" fill="#c5cf3a"/>
 <polygon points="18,186 22,188 22,192.5 18,190.5" fill="#1a78b0"/>
 <polygon points="30,184 34,186 34,190.5 30,192.5 26,190.5 26,186" fill="#c5cf3a"/>
 <polygon points="26,186 30,188 30,192.5 26,190.5" fill="#1a78b0"/>
 </g>
 <!-- resize handle -->
 <rect x="259" y="147" width="1" height="15" fill="#c8c8c8"/>
 </g>
</svg>


<div class="card" style="left:266px;top:65px;width:349px;height:392px;box-shadow:0 1px 3px rgba(0,0,0,.05)"></div>
<div class="a" style="left:576px;top:72px;width:31px;height:31px;border:1px solid #e2e2e2;border-radius:4px;background:#fff"></div>
<div class="a" style="left:318px;top:186px;width:116px;height:1px;background:#e0e0e0"></div>
<div class="a" style="left:489px;top:186px;width:113px;height:1px;background:#e0e0e0"></div>
<div class="a" style="left:318px;top:222px;width:116px;height:1px;background:#e0e0e0"></div>
<div class="a" style="left:489px;top:222px;width:113px;height:1px;background:#e0e0e0"></div>
<div class="a" style="left:318px;top:258px;width:116px;height:1px;background:#e0e0e0"></div>
<div class="a" style="left:489px;top:258px;width:113px;height:1px;background:#e0e0e0"></div>
<div class="a" style="left:571px;top:150px;width:31px;height:1px;background:#e0e0e0"></div>
<div class="a" style="left:278px;top:295px;width:324px;height:34px;background:#e8f6fc;border:2px solid #2aabe0"></div>
<div class="a" style="left:278px;top:365px;width:324px;height:34px;background:#fff;border:1px solid #f3c9ce"></div>
<div class="a" style="left:266px;top:407px;width:349px;height:1px;background:#e8e8e8"></div>
<div class="a" style="left:276px;top:416px;width:32px;height:32px;border:1px solid #e2e2e2;border-radius:4px;background:#fff"></div>
<div class="a" style="left:516px;top:416px;width:88px;height:32px;background:#0077ab;border-radius:4px"></div>
<svg class="a" style="left:0;top:0" width="620" height="460">
 <path d="M587,84 L595,92 M595,84 L587,92" stroke="#666" stroke-width="1.1"/>
 <polyline points="590.00,133.00 594.00,137.00 598.00,133.00" fill="none" stroke="#777" stroke-width="1"/>
 <path d="M286.22499999999997,427.8 H297.775 M289.9,427.8 V426.225 H294.1 V427.8" fill="none" stroke="#888" stroke-width="1.05"/><path d="M287.275,429.375 L287.905,437.77500000000003 H296.09499999999997 L296.72499999999997,429.375 Z" fill="none" stroke="#888" stroke-width="1.05"/><path d="M289.9,430.95000000000005 V436.20000000000005 M292,430.95000000000005 V436.20000000000005 M294.1,430.95000000000005 V436.20000000000005" stroke="#888" stroke-width="0.8400000000000001"/>
</svg>


<div class="card" style="left:1676px;top:65px;width:236px;height:474px;box-shadow:0 0 12px rgba(0,0,0,.045)"></div>
<div class="a" style="left:1677px;top:502px;width:234px;height:1px;background:#e6e6e6"></div>
<svg class="a" style="left:1660px;top:60px" width="259" height="490">
 <g transform="translate(-1660,-60)">
 <polyline points="1690.50,81.50 1695.00,86.50 1699.50,81.50" fill="none" stroke="#777" stroke-width="1.1"/>
 <rect x="1690.5" y="111.5" width="10" height="10" fill="#fff" stroke="#d8d8d8" stroke-width="1"/>
 <path d="M1693,116.5 H1698" stroke="#555" stroke-width="1"/>
 <path d="M1695.5,103 V111" stroke="#d8d8d8" stroke-width="1"/>
 <path d="M1719.5,131 V480.5 H1724.5" fill="none" stroke="#dcdcdc" stroke-width="1"/>
 <polygon points="1742.70,135.90 1749.71,139.95 1742.70,144.00 1735.69,139.95" fill="#e8e8e8"/><polygon points="1735.69,139.95 1742.70,144.00 1742.70,152.10 1735.69,148.05" fill="#9a9a9a"/><polygon points="1742.70,144.00 1749.71,139.95 1749.71,148.05 1742.70,152.10" fill="#cdcdcd"/><polygon points="1742.70,135.90 1749.71,139.95 1749.71,148.05 1742.70,152.10 1735.69,148.05 1735.69,139.95" fill="none" stroke="none" stroke-width="0" stroke-linejoin="round"/><path d="M1719.5,144.0 H1724" stroke="#dcdcdc" stroke-width="1"/><polygon points="1742.70,163.90 1749.71,167.95 1742.70,172.00 1735.69,167.95" fill="#e8e8e8"/><polygon points="1735.69,167.95 1742.70,172.00 1742.70,180.10 1735.69,176.05" fill="#9a9a9a"/><polygon points="1742.70,172.00 1749.71,167.95 1749.71,176.05 1742.70,180.10" fill="#cdcdcd"/><polygon points="1742.70,163.90 1749.71,167.95 1749.71,176.05 1742.70,180.10 1735.69,176.05 1735.69,167.95" fill="none" stroke="none" stroke-width="0" stroke-linejoin="round"/><path d="M1719.5,172.0 H1724" stroke="#dcdcdc" stroke-width="1"/><polygon points="1742.70,191.90 1749.71,195.95 1742.70,200.00 1735.69,195.95" fill="#e8e8e8"/><polygon points="1735.69,195.95 1742.70,200.00 1742.70,208.10 1735.69,204.05" fill="#9a9a9a"/><polygon points="1742.70,200.00 1749.71,195.95 1749.71,204.05 1742.70,208.10" fill="#cdcdcd"/><polygon points="1742.70,191.90 1749.71,195.95 1749.71,204.05 1742.70,208.10 1735.69,204.05 1735.69,195.95" fill="none" stroke="none" stroke-width="0" stroke-linejoin="round"/><path d="M1719.5,200.0 H1724" stroke="#dcdcdc" stroke-width="1"/><polygon points="1742.70,219.90 1749.71,223.95 1742.70,228.00 1735.69,223.95" fill="#e8e8e8"/><polygon points="1735.69,223.95 1742.70,228.00 1742.70,236.10 1735.69,232.05" fill="#9a9a9a"/><polygon points="1742.70,228.00 1749.71,223.95 1749.71,232.05 1742.70,236.10" fill="#cdcdcd"/><polygon points="1742.70,219.90 1749.71,223.95 1749.71,232.05 1742.70,236.10 1735.69,232.05 1735.69,223.95" fill="none" stroke="none" stroke-width="0" stroke-linejoin="round"/><path d="M1719.5,228.0 H1724" stroke="#dcdcdc" stroke-width="1"/><polygon points="1742.70,247.90 1749.71,251.95 1742.70,256.00 1735.69,251.95" fill="#e8e8e8"/><polygon points="1735.69,251.95 1742.70,256.00 1742.70,264.10 1735.69,260.05" fill="#9a9a9a"/><polygon points="1742.70,256.00 1749.71,251.95 1749.71,260.05 1742.70,264.10" fill="#cdcdcd"/><polygon points="1742.70,247.90 1749.71,251.95 1749.71,260.05 1742.70,264.10 1735.69,260.05 1735.69,251.95" fill="none" stroke="none" stroke-width="0" stroke-linejoin="round"/><path d="M1719.5,256.0 H1724" stroke="#dcdcdc" stroke-width="1"/><polygon points="1742.70,275.90 1749.71,279.95 1742.70,284.00 1735.69,279.95" fill="#e8e8e8"/><polygon points="1735.69,279.95 1742.70,284.00 1742.70,292.10 1735.69,288.05" fill="#9a9a9a"/><polygon points="1742.70,284.00 1749.71,279.95 1749.71,288.05 1742.70,292.10" fill="#cdcdcd"/><polygon points="1742.70,275.90 1749.71,279.95 1749.71,288.05 1742.70,292.10 1735.69,288.05 1735.69,279.95" fill="none" stroke="none" stroke-width="0" stroke-linejoin="round"/><path d="M1719.5,284.0 H1724" stroke="#dcdcdc" stroke-width="1"/><polygon points="1742.70,303.90 1749.71,307.95 1742.70,312.00 1735.69,307.95" fill="#e8e8e8"/><polygon points="1735.69,307.95 1742.70,312.00 1742.70,320.10 1735.69,316.05" fill="#9a9a9a"/><polygon points="1742.70,312.00 1749.71,307.95 1749.71,316.05 1742.70,320.10" fill="#cdcdcd"/><polygon points="1742.70,303.90 1749.71,307.95 1749.71,316.05 1742.70,320.10 1735.69,316.05 1735.69,307.95" fill="none" stroke="none" stroke-width="0" stroke-linejoin="round"/><path d="M1719.5,312.0 H1724" stroke="#dcdcdc" stroke-width="1"/><polygon points="1742.70,331.90 1749.71,335.95 1742.70,340.00 1735.69,335.95" fill="#e8e8e8"/><polygon points="1735.69,335.95 1742.70,340.00 1742.70,348.10 1735.69,344.05" fill="#9a9a9a"/><polygon points="1742.70,340.00 1749.71,335.95 1749.71,344.05 1742.70,348.10" fill="#cdcdcd"/><polygon points="1742.70,331.90 1749.71,335.95 1749.71,344.05 1742.70,348.10 1735.69,344.05 1735.69,335.95" fill="none" stroke="none" stroke-width="0" stroke-linejoin="round"/><path d="M1719.5,340.0 H1724" stroke="#dcdcdc" stroke-width="1"/><polygon points="1742.70,359.90 1749.71,363.95 1742.70,368.00 1735.69,363.95" fill="#e8e8e8"/><polygon points="1735.69,363.95 1742.70,368.00 1742.70,376.10 1735.69,372.05" fill="#9a9a9a"/><polygon points="1742.70,368.00 1749.71,363.95 1749.71,372.05 1742.70,376.10" fill="#cdcdcd"/><polygon points="1742.70,359.90 1749.71,363.95 1749.71,372.05 1742.70,376.10 1735.69,372.05 1735.69,363.95" fill="none" stroke="none" stroke-width="0" stroke-linejoin="round"/><path d="M1719.5,368.0 H1724" stroke="#dcdcdc" stroke-width="1"/><polygon points="1742.70,387.90 1749.71,391.95 1742.70,396.00 1735.69,391.95" fill="#e8e8e8"/><polygon points="1735.69,391.95 1742.70,396.00 1742.70,404.10 1735.69,400.05" fill="#9a9a9a"/><polygon points="1742.70,396.00 1749.71,391.95 1749.71,400.05 1742.70,404.10" fill="#cdcdcd"/><polygon points="1742.70,387.90 1749.71,391.95 1749.71,400.05 1742.70,404.10 1735.69,400.05 1735.69,391.95" fill="none" stroke="none" stroke-width="0" stroke-linejoin="round"/><path d="M1719.5,396.0 H1724" stroke="#dcdcdc" stroke-width="1"/><polygon points="1742.70,415.90 1749.71,419.95 1742.70,424.00 1735.69,419.95" fill="#e8e8e8"/><polygon points="1735.69,419.95 1742.70,424.00 1742.70,432.10 1735.69,428.05" fill="#9a9a9a"/><polygon points="1742.70,424.00 1749.71,419.95 1749.71,428.05 1742.70,432.10" fill="#cdcdcd"/><polygon points="1742.70,415.90 1749.71,419.95 1749.71,428.05 1742.70,432.10 1735.69,428.05 1735.69,419.95" fill="none" stroke="none" stroke-width="0" stroke-linejoin="round"/><path d="M1719.5,424.0 H1724" stroke="#dcdcdc" stroke-width="1"/><polygon points="1742.70,443.90 1749.71,447.95 1742.70,452.00 1735.69,447.95" fill="#e8e8e8"/><polygon points="1735.69,447.95 1742.70,452.00 1742.70,460.10 1735.69,456.05" fill="#9a9a9a"/><polygon points="1742.70,452.00 1749.71,447.95 1749.71,456.05 1742.70,460.10" fill="#cdcdcd"/><polygon points="1742.70,443.90 1749.71,447.95 1749.71,456.05 1742.70,460.10 1735.69,456.05 1735.69,447.95" fill="none" stroke="none" stroke-width="0" stroke-linejoin="round"/><path d="M1719.5,452.0 H1724" stroke="#dcdcdc" stroke-width="1"/><polygon points="1742.70,471.90 1749.71,475.95 1742.70,480.00 1735.69,475.95" fill="#e8e8e8"/><polygon points="1735.69,475.95 1742.70,480.00 1742.70,488.10 1735.69,484.05" fill="#9a9a9a"/><polygon points="1742.70,480.00 1749.71,475.95 1749.71,484.05 1742.70,488.10" fill="#cdcdcd"/><polygon points="1742.70,471.90 1749.71,475.95 1749.71,484.05 1742.70,488.10 1735.69,484.05 1735.69,475.95" fill="none" stroke="none" stroke-width="0" stroke-linejoin="round"/><path d="M1719.5,480.0 H1724" stroke="#dcdcdc" stroke-width="1"/>
 <rect x="1881" y="516.5" width="18" height="8.5" rx="4.25" fill="#efefef" stroke="#e8e8e8"/>
 <circle cx="1882.6" cy="520.8" r="7.3" fill="#fff" stroke="#d6d6d6"/>
 <rect x="1670" y="294" width="1" height="15" fill="#c4c4c4"/><rect x="1673" y="294" width="1" height="15" fill="#c4c4c4"/>
 </g>
</svg>

<div class="t" style="left:11.85px;top:23.54px;font-size:10px;font-weight:normal;color:#555;transform:scaleX(0.934);">CREATE</div>
<div class="t" style="left:219.75px;top:23.54px;font-size:10px;font-weight:normal;color:#555;transform:scaleX(0.921);">FACE</div>
<div class="t" style="left:405.60px;top:23.54px;font-size:10px;font-weight:normal;color:#555;transform:scaleX(0.967);">BODY</div>
<div class="t" style="left:969.50px;top:23.54px;font-size:10px;font-weight:normal;color:#555;transform:scaleX(0.998);">MODEL</div>
<div class="t" style="left:1165.00px;top:23.54px;font-size:10px;font-weight:normal;color:#555;transform:scaleX(0.927);">TOOLS</div>
<div class="t" style="left:70.80px;top:34.62px;font-size:9.9px;font-weight:normal;color:#333;transform:scaleX(0.916);">External</div>
<div class="t" style="left:138.75px;top:34.62px;font-size:9.9px;font-weight:normal;color:#333;transform:scaleX(0.917);">Primitives</div>
<div class="t" style="left:258.75px;top:34.62px;font-size:9.9px;font-weight:normal;color:#333;transform:scaleX(0.920);">Delete</div>
<div class="t" style="left:305.00px;top:34.62px;font-size:9.9px;font-weight:normal;color:#333;transform:scaleX(0.907);">Move</div>
<div class="t" style="left:345.00px;top:34.62px;font-size:9.9px;font-weight:normal;color:#333;transform:scaleX(0.918);">Extrude</div>
<div class="t" style="left:448.00px;top:34.62px;font-size:9.9px;font-weight:normal;color:#333;transform:scaleX(0.925);">Delete</div>
<div class="t" style="left:490.00px;top:34.62px;font-size:9.9px;font-weight:normal;color:#333;transform:scaleX(0.872);">Close sheet</div>
<div class="t" style="left:550.00px;top:34.62px;font-size:9.9px;font-weight:normal;color:#333;transform:scaleX(0.889);">Facet split</div>
<div class="t" style="left:604.50px;top:34.62px;font-size:9.9px;font-weight:normal;color:#333;transform:scaleX(0.969);">Imprint</div>
<div class="t" style="left:652.50px;top:34.62px;font-size:9.9px;font-weight:normal;color:#333;transform:scaleX(0.830);">Scale</div>
<div class="t" style="left:698.00px;top:34.62px;font-size:9.9px;font-weight:normal;color:#333;transform:scaleX(0.950);">Split</div>
<div class="t" style="left:738.00px;top:34.62px;font-size:9.9px;font-weight:normal;color:#333;transform:scaleX(0.883);">Boolean</div>
<div class="t" style="left:798.00px;top:34.62px;font-size:9.9px;font-weight:normal;color:#333;transform:scaleX(0.913);">Transform</div>
<div class="t" style="left:864.50px;top:34.62px;font-size:9.9px;font-weight:normal;color:#333;transform:scaleX(0.918);">Simplify</div>
<div class="t" style="left:913.75px;top:34.62px;font-size:9.9px;font-weight:normal;color:#333;transform:scaleX(0.961);">Wrap</div>
<div class="t" style="left:1018.25px;top:34.62px;font-size:9.9px;font-weight:normal;color:#333;transform:scaleX(0.908);">Fix interferences</div>
<div class="t" style="left:1098.75px;top:34.62px;font-size:9.9px;font-weight:normal;color:#333;transform:scaleX(0.899);">Add CAD</div>
<div class="t" style="left:1214.50px;top:34.62px;font-size:9.9px;font-weight:normal;color:#333;transform:scaleX(0.847);">Gaps</div>
<div class="t" style="left:1253.75px;top:34.62px;font-size:9.9px;font-weight:normal;color:#333;transform:scaleX(0.911);">Interferences</div>
<div class="t" style="left:1748.25px;top:20.23px;font-size:14.5px;font-weight:normal;color:#333;transform:scaleX(0.894);">Delete draft</div>
<div class="t" style="left:1869.50px;top:20.23px;font-size:14.5px;font-weight:normal;color:#fff;transform:scaleX(0.802);">Save</div>
<div class="t" style="left:65.50px;top:76.57px;font-size:13.5px;font-weight:normal;color:#333;transform:scaleX(0.899);-webkit-text-stroke:0.45px #333;">GEOMETRIES</div>
<div class="t" style="left:65.50px;top:108.15px;font-size:14px;font-weight:normal;color:#333;transform:scaleX(0.901);">3-Phase Transformer</div>
<div class="t" style="left:65.50px;top:136.15px;font-size:14px;font-weight:normal;color:#333;transform:scaleX(0.896);">3-Phase Transformer - Copy</div>
<div class="t" style="left:40.90px;top:176.17px;font-size:13.5px;font-weight:normal;color:#333;transform:scaleX(0.943);-webkit-text-stroke:0.45px #333;">SIMULATIONS (0)</div>
<div class="t" style="left:19.00px;top:217.90px;font-size:15px;font-weight:normal;color:#333;transform:scaleX(0.980);-webkit-text-stroke:0.55px #333;">Job status</div>
<div class="t" style="left:278.75px;top:81.05px;font-size:15.3px;font-weight:normal;color:#333;transform:scaleX(0.998);-webkit-text-stroke:0.55px #333;">External flow volume</div>
<div class="t" style="left:278.75px;top:127.25px;font-size:14px;font-weight:normal;color:#333;transform:scaleX(0.911);-webkit-text-stroke:0.35px #333;">Box dimensions</div>
<div class="t" style="left:575.60px;top:127.45px;font-size:14px;font-weight:normal;color:#444;transform:scaleX(0.908);">m</div>
<div class="t" style="left:278.20px;top:163.45px;font-size:14px;font-weight:normal;color:#333;transform:scaleX(0.883);">X min</div>
<div class="t" style="left:445.40px;top:163.45px;font-size:14px;font-weight:normal;color:#333;transform:scaleX(0.887);">X max</div>
<div class="t" style="left:278.20px;top:199.35px;font-size:14px;font-weight:normal;color:#333;transform:scaleX(0.889);">Y min</div>
<div class="t" style="left:445.40px;top:199.35px;font-size:14px;font-weight:normal;color:#333;transform:scaleX(0.893);">Y max</div>
<div class="t" style="left:278.20px;top:235.35px;font-size:14px;font-weight:normal;color:#333;transform:scaleX(0.903);">Z min</div>
<div class="t" style="left:445.40px;top:235.35px;font-size:14px;font-weight:normal;color:#333;transform:scaleX(0.905);">Z max</div>
<div class="t" style="left:322.40px;top:163.75px;font-size:14px;font-weight:normal;color:#333;transform:scaleX(0.904);">-0.6</div>
<div class="t" style="left:492.30px;top:163.75px;font-size:14px;font-weight:normal;color:#333;transform:scaleX(0.909);">0.6</div>
<div class="t" style="left:322.40px;top:199.55px;font-size:14px;font-weight:normal;color:#333;transform:scaleX(0.883);">-1</div>
<div class="t" style="left:492.30px;top:199.55px;font-size:14px;font-weight:normal;color:#333;transform:scaleX(0.898);">1</div>
<div class="t" style="left:322.40px;top:235.55px;font-size:14px;font-weight:normal;color:#333;transform:scaleX(0.883);">-1</div>
<div class="t" style="left:492.30px;top:235.55px;font-size:14px;font-weight:normal;color:#333;transform:scaleX(0.898);">1</div>
<div class="t" style="left:278.30px;top:272.07px;font-size:13.5px;font-weight:normal;color:#333;transform:scaleX(0.936);-webkit-text-stroke:0.35px #333;">Seed face (optional)</div>
<div class="t" style="left:559.20px;top:272.92px;font-size:12.5px;font-weight:normal;color:#1a7db3;transform:scaleX(0.880);">Clear list</div>
<div class="t" style="left:288.20px;top:304.97px;font-size:13.5px;font-weight:normal;color:#6f6f6f;transform:scaleX(0.830);font-style:italic;">Pick Face</div>
<div class="t" style="left:278.30px;top:341.97px;font-size:13.5px;font-weight:normal;color:#333;transform:scaleX(0.962);-webkit-text-stroke:0.35px #333;">Excluded parts (optional)</div>
<div class="t" style="left:559.20px;top:342.82px;font-size:12.5px;font-weight:normal;color:#1a7db3;transform:scaleX(0.880);">Clear list</div>
<div class="t" style="left:288.00px;top:375.37px;font-size:13.5px;font-weight:normal;color:#6f6f6f;transform:scaleX(0.862);font-style:italic;">Pick Volumes</div>
<div class="t" style="left:543.35px;top:424.35px;font-size:14px;font-weight:bold;color:#fff;transform:scaleX(0.856);">Apply</div>
<div class="t" style="left:1709.20px;top:76.35px;font-size:14px;font-weight:normal;color:#333;transform:scaleX(0.890);-webkit-text-stroke:0.2px #333;">GEOMETRY</div>
<div class="t" style="left:1709.20px;top:108.37px;font-size:13.5px;font-weight:normal;color:#333;transform:scaleX(0.947);-webkit-text-stroke:0.45px #333;">3-Phase Transformer - Copy</div>
<div class="t" style="left:1757.10px;top:136.87px;font-size:13.5px;font-weight:normal;color:#333;transform:scaleX(0.933);">Secondary winding 1</div>
<div class="t" style="left:1757.10px;top:164.87px;font-size:13.5px;font-weight:normal;color:#333;transform:scaleX(0.963);">Primary Winding 3</div>
<div class="t" style="left:1757.10px;top:192.87px;font-size:13.5px;font-weight:normal;color:#333;transform:scaleX(0.939);">Secondary Windin...</div>
<div class="t" style="left:1757.10px;top:220.87px;font-size:13.5px;font-weight:normal;color:#333;transform:scaleX(0.963);">Primary Winding 3</div>
<div class="t" style="left:1757.10px;top:248.87px;font-size:13.5px;font-weight:normal;color:#333;transform:scaleX(0.939);">Secondary Windin...</div>
<div class="t" style="left:1757.10px;top:276.87px;font-size:13.5px;font-weight:normal;color:#333;transform:scaleX(0.961);">Primary Winding 2</div>
<div class="t" style="left:1757.10px;top:304.87px;font-size:13.5px;font-weight:normal;color:#333;transform:scaleX(0.933);">Secondary winding 2</div>
<div class="t" style="left:1757.10px;top:332.87px;font-size:13.5px;font-weight:normal;color:#333;transform:scaleX(0.992);">M24-100-01-01.stp</div>
<div class="t" style="left:1757.10px;top:360.87px;font-size:13.5px;font-weight:normal;color:#333;transform:scaleX(0.961);">Primary Winding 2</div>
<div class="t" style="left:1757.10px;top:388.87px;font-size:13.5px;font-weight:normal;color:#333;transform:scaleX(0.933);">Secondary winding 2</div>
<div class="t" style="left:1757.10px;top:416.87px;font-size:13.5px;font-weight:normal;color:#333;transform:scaleX(0.960);">Primary winding 1</div>
<div class="t" style="left:1757.10px;top:444.87px;font-size:13.5px;font-weight:normal;color:#333;transform:scaleX(0.933);">Secondary winding 1</div>
<div class="t" style="left:1757.10px;top:472.87px;font-size:13.5px;font-weight:normal;color:#333;transform:scaleX(0.960);">Primary winding 1</div>
<div class="t" style="left:1689.00px;top:513.17px;font-size:13.5px;font-weight:normal;color:#333;transform:scaleX(0.907);">Show faces</div>
<div class="t" style="left:950.60px;top:877.97px;font-size:13.5px;font-weight:normal;color:#333;transform:scaleX(0.875);">1 m</div>

<div class="hl" style="left:52px;top:0;width:78px;height:59px"></div>
<div class="hl" style="left:263px;top:110px;width:355px;height:157px"></div>

<div class="badge" style="left:13.75px;top:49.35px;width:54.5px;height:54.5px"></div><div class="t" style="left:14.00px;top:56.82px;width:54px;text-align:center;font-size:40.5px;color:#fff"></div><div class="badge" style="left:624.95px;top:184.75px;width:54.5px;height:54.5px"></div><div class="t" style="left:625.20px;top:192.22px;width:54px;text-align:center;font-size:40.5px;color:#fff">2</div><div class="badge" style="left:453.05px;top:403.75px;width:54.5px;height:54.5px"></div><div class="t" style="left:453.30px;top:411.22px;width:54px;text-align:center;font-size:40.5px;color:#fff">3</div><svg class="a" style="left:0;top:50px" width="80" height="60"><polygon points="42.6,11.8 46.6,11.8 46.6,41.1 42.6,41.1 42.6,17.6 34.2,21 34.2,17.4 42,12" fill="#fff"/></svg>
</body></html>
